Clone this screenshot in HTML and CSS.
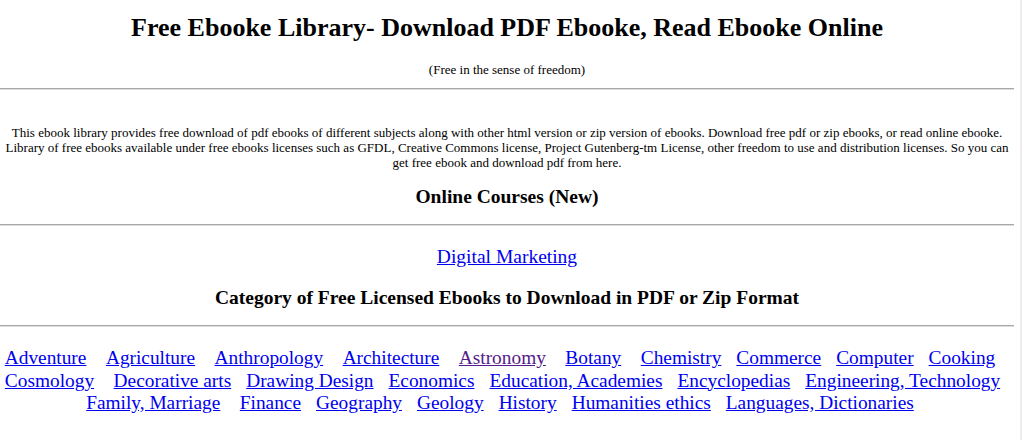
FILE: index.html
```html
<!DOCTYPE html>
<html lang="en">
<head>
<meta charset="utf-8">
<title>Free Ebooke Library</title>
<link rel="stylesheet" href="styles.css">
</head>
<body>
<div class="page">
  <main class="main">
    <h1 class="title">Free Ebooke Library- Download PDF Ebooke, Read Ebooke Online</h1>
    <p class="subtitle">(Free in the sense of freedom)</p>
    <hr class="rule rule-top">
    <p class="intro">This ebook library provides free download of pdf ebooks of different subjects along with other html version or zip version of ebooks. Download free pdf or zip ebooks, or read online ebooke. Library of free ebooks available under free ebooks licenses such as GFDL, Creative Commons license, Project Gutenberg-tm License, other freedom to use and distribution licenses. So you can get free ebook and download pdf from here.</p>
    <h3 class="section section-courses">Online Courses (New)</h3>
    <hr class="rule rule-mid">
    <p class="course"><a href="#">Digital Marketing</a></p>
    <h3 class="section section-cats">Category of Free Licensed Ebooks to Download in PDF or Zip Format</h3>
    <hr class="rule rule-mid">
    <div class="cats">
      <div class="cat-row">
        <a href="#">Adventure</a>
        <a href="#" class="wide">Agriculture</a>
        <a href="#" class="wide">Anthropology</a>
        <a href="#" class="wide">Architecture</a>
        <a href="#" class="wide visited">Astronomy</a>
        <a href="#" class="wide">Botany</a>
        <a href="#" class="wide">Chemistry</a>
        <a href="#">Commerce</a>
        <a href="#">Computer</a>
        <a href="#">Cooking</a>
      </div>
      <div class="cat-row row-two">
        <a href="#">Cosmology</a>
        <a href="#" class="wide">Decorative arts</a>
        <a href="#">Drawing Design</a>
        <a href="#">Economics</a>
        <a href="#">Education, Academies</a>
        <a href="#">Encyclopedias</a>
        <a href="#">Engineering, Technology</a>
      </div>
      <div class="cat-row">
        <a href="#">Family, Marriage</a>
        <a href="#" class="wide">Finance</a>
        <a href="#">Geography</a>
        <a href="#">Geology</a>
        <a href="#">History</a>
        <a href="#">Humanities ethics</a>
        <a href="#">Languages, Dictionaries</a>
      </div>
    </div>
  </main>
  <div class="track"></div>
</div>
</body>
</html>
```

FILE: styles.css
```css
html, body {
  margin: 0;
  padding: 0;
  background: #ffffff;
}

body {
  font-family: "Liberation Serif", "Times New Roman", serif;
  color: #000000;
}

.page {
  display: flex;
  height: 440px;
  overflow: hidden;
}

.main {
  width: 1014px;
  flex: none;
}

.track {
  flex: none;
  width: 2px;
  margin-left: 6px;
  background: #ededed;
}

a {
  color: #0000ee;
  text-decoration: underline;
}

a.visited {
  color: #551a8b;
}

.title {
  margin: 14px 0 0;
  font-size: 26px;
  line-height: 28px;
  font-weight: bold;
  text-align: center;
}

.subtitle {
  margin: 20px 0 0;
  font-size: 13px;
  line-height: 15px;
  text-align: center;
}

.rule {
  height: 0;
  margin: 0;
  border: none;
  border-top: 1px solid #a8a8a8;
  border-bottom: 1px solid #dcdcdc;
}

.rule-top {
  margin-top: 11px;
}

.rule-mid {
  margin-top: 16px;
}

.intro {
  margin: 35px 0 0;
  padding: 0 4px;
  font-size: 13px;
  line-height: 15px;
  text-align: center;
}

.section {
  margin: 0;
  font-size: 19.5px;
  line-height: 22px;
  font-weight: bold;
  text-align: center;
}

.section-courses {
  margin-top: 16px;
}

.section-cats {
  margin-top: 19px;
}

.course {
  margin: 20px 0 0;
  font-size: 19.5px;
  line-height: 22px;
  text-align: center;
}

.cats {
  margin-top: 20px;
  padding-right: 14px;
  font-size: 19.35px;
  line-height: 22.5px;
}

.cat-row {
  display: flex;
  justify-content: center;
  column-gap: 15px;
  white-space: nowrap;
}

.row-two {
  padding-left: 5px;
}

.cat-row .wide {
  margin-left: 4.5px;
}
```
